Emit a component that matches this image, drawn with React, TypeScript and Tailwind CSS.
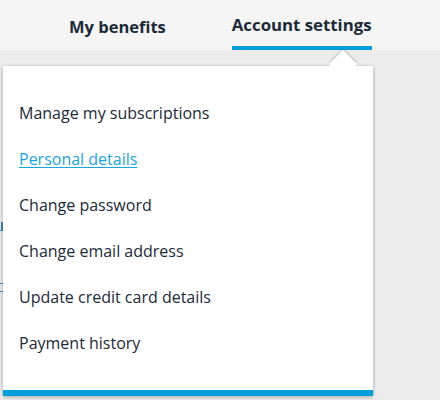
import React from 'react';

const items = [
  'Manage my subscriptions',
  'Personal details',
  'Change password',
  'Change email address',
  'Update credit card details',
  'Payment history',
];

export default function App() {
  return (
    <div className="relative h-[400px] w-[440px] overflow-hidden bg-[#ececec] font-['Open_Sans',sans-serif] text-[#1b2a38]">
      {/* top nav */}
      <div className="flex h-[50px] items-end bg-[#f5f5f5]">
        <div className="ml-[69px] flex h-full items-center pt-[4px] text-[16.5px] font-bold">My benefits</div>
        <div className="ml-[66px] flex h-full flex-col">
          <div className="flex flex-1 items-center pt-[3px] text-[16.8px] font-bold">Account settings</div>
          <div className="h-[4px] bg-[#009fda]" />
        </div>
      </div>

      {/* slivers of page links behind the dropdown */}
      <div className="absolute left-0 top-[222px] h-[9px] w-[3px] border-b border-r-2 border-[#4a86b8]" />
      <div className="absolute left-0 top-[283px] h-[9px] w-[3px] border-y border-[#4a86b8]" />

      {/* dropdown */}
      <div className="absolute left-[3px] top-[66px] w-[370px] bg-white shadow-[0_1px_4px_rgba(0,0,0,0.3)]">
        <div className="absolute -top-[12px] right-[20px] h-[20px] w-[20px] rotate-45 bg-white shadow-[-1px_-1px_2px_rgba(0,0,0,0.2)]" />
        <ul className="relative flex flex-col pb-[24px] pt-[24px] text-[16px]">
          {items.map((label, i) => (
            <li key={label} className="flex h-[46px] items-center px-[16px]">
              {i === 1 ? (
                <a href="#" className="text-[#1ea4dc] underline underline-offset-2">{label}</a>
              ) : (
                <span>{label}</span>
              )}
            </li>
          ))}
        </ul>
        <div className="h-[6px] bg-[#009fda]" />
      </div>
    </div>
  );
}
